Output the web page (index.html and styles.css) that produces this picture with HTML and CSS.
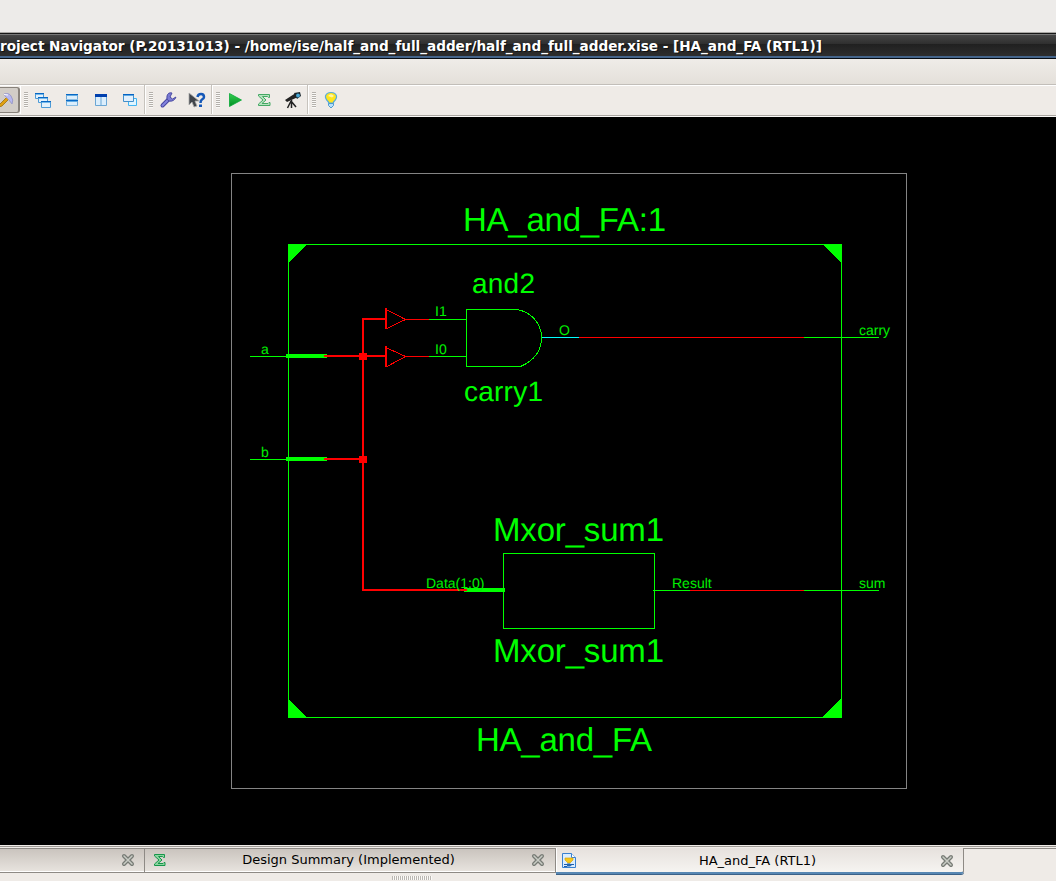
FILE: index.html
```html
<!DOCTYPE html>
<html lang="en">
<head>
<meta charset="utf-8">
<title>Project Navigator</title>
<link rel="stylesheet" href="styles.css">
</head>
<body>
<div class="app">
  <div class="desktop-strip"></div>
  <header class="titlebar"><span class="title">roject Navigator (P.20131013) - /home/ise/half_and_full_adder/half_and_full_adder.xise - [HA_and_FA (RTL1)]</span></header>
  <div class="menubar"></div>
  <div class="toolbar">
    <div class="pressed">
      <svg width="18" height="24" viewBox="0 0 18 24"><path d="M-1 17L7 9L9 11L2 18L-1 19Z" fill="#e0a010" stroke="#9b7010" stroke-width=".8"/><path d="M4 6Q9 4.500 11 8Q14 12 12 16L9 12L5 8Z" fill="#b8b8f0" stroke="#9c9cc8"/><path d="M4 6.500L8 7" stroke="#fff"/></svg>
    </div>
    <div class="group">
      <i class="grip"></i>
      <span class="tool"><svg width="18" height="18" viewBox="0 0 18 18"><g stroke="#4d9ad6" fill="#e3f1fc"><path d="M1.500 2.500h8v5h-8z"/><path d="M4.500 6.500h9v5h-9z"/><path d="M7.500 10.500h9v6h-9z"/></g><path d="M1 2.500h9M4 6.500h10M7 10.500h10" stroke="#0868c5"/><path d="M2 3.500h7M5 7.500h8M8 11.500h8" stroke="#75b8ea"/></svg></span>
      <span class="tool"><svg width="18" height="18" viewBox="0 0 18 18"><path d="M3.500 3.500h11v11h-11z" fill="#dceefc" stroke="#6fa9d6"/><path d="M3 3.500h12M3 9.500h12" stroke="#0868c5"/><path d="M4 4.500h10M4 10.500h10" stroke="#62ace4"/><path d="M3 8.500h12M3 14.500h12" stroke="#8bbde2"/></svg></span>
      <span class="tool"><svg width="18" height="18" viewBox="0 0 18 18"><path d="M3.500 3.500h11v11h-11zM9 5v9" fill="#dceefc" stroke="#6ba6d4"/><path d="M3 4.500h12" stroke="#003fae" stroke-width="3"/></svg></span>
      <span class="tool"><svg width="18" height="18" viewBox="0 0 18 18"><path d="M7.500 7.500h8v7h-8z" fill="#dff5ff" stroke="#42b4f2"/><path d="M2.500 3.500h10v7h-10z" fill="#e1effc" stroke="#438fcb"/><path d="M2 3.500h11" stroke="#0563c5"/><path d="M3 4.500h9" stroke="#60a9e1"/></svg></span>
    </div>
    <div class="group">
      <i class="grip"></i>
      <span class="tool"><svg width="18" height="18" viewBox="0 0 18 18"><path d="M3.500 14.500L9 9" stroke="#4646a0" stroke-width="4" stroke-linecap="round"/><path d="M3.500 14.500L9 9" stroke="#8585df" stroke-width="2" stroke-linecap="round"/><path d="M13 2Q9 1 8 5Q7 9 10 10Q15 11 17 6L13.500 8L11 6Z" fill="#7a7ad3" stroke="#4b4ba3"/></svg></span>
      <span class="tool"><svg width="18" height="18" viewBox="0 0 18 18"><path d="M1 2v12l3-3 2 5 3-1-2-5h4z" fill="#40444a" stroke="#aaa" stroke-width=".8"/><path d="M9.500 6Q10 3 13 3Q16 3 16 6Q16 7.500 14 8.500Q12.500 9.500 12.500 12" fill="none" stroke="#1558b8" stroke-width="2.500"/><path d="M11 13.500h3v2.500h-3z" fill="#1558b8"/></svg></span>
    </div>
    <div class="group">
      <i class="grip"></i>
      <span class="tool"><svg width="18" height="18" viewBox="0 0 18 18"><defs><linearGradient id="play" x2="0" y2="1"><stop stop-color="#35cf51"/><stop offset="1" stop-color="#008e23"/></linearGradient></defs><path d="M3.500 2.500L15.500 9L3.500 15.500Z" fill="url(#play)" stroke="#08a936" stroke-width=".8"/></svg></span>
      <span class="tool"><svg width="18" height="18" viewBox="0 0 18 18"><path d="M3.500 3.500h11v3h-1l-1-1h-5L11 9l-4 3.500h6l1-1h1v3H3.500v-1.500L8 9L3.500 5z" fill="#b4e3be" stroke="#45a864"/></svg></span>
      <span class="tool"><svg width="18" height="18" viewBox="0 0 18 18"><path d="M1 9L11 2.500L14 6L3 11Z" fill="#222"/><path d="M10 2L16 1L17 5L13 8Z" fill="#17242b"/><circle cx="14" cy="4.500" r="1.900" fill="#48a5d2"/><path d="M7.500 9v8M7 10L3.500 17M7 10L12 16" stroke="#222" stroke-width="1.500"/></svg></span>
    </div>
    <div class="group last">
      <i class="grip"></i>
      <span class="tool"><svg width="18" height="18" viewBox="0 0 18 18"><path d="M6.500 11Q3 7.500 3.500 5Q4.500 1.500 9 1.500T14.500 5Q15 7.500 11.500 11V12h-5z" fill="#ffe51e" stroke="#58abd9" stroke-width="1.200"/><path d="M6 5Q9 1.500 12 5L10 6.500Z" fill="#fff5a6"/><path d="M6.500 12.500h5v2L9 17L6.500 14.500z" fill="#b8dffa" stroke="#4b9bd1"/></svg></span>
    </div>
  </div>
  <main class="canvas">
    <svg class="schematic" width="1056" height="728" viewBox="0 117 1056 728" shape-rendering="crispEdges">
      <path class="frame" d="M231.500 173.500h675v615h-675z"/>
      <g class="green">
        <path d="M288.500 244.500h553v473h-553z"/>
        <path class="corner" d="M288 244h19l-19 19zM842 244v20l-20-20zM288 718v-20l19 20zM842 718v-21l-21 21z"/>
        <path d="M250 356.500h38M250 459.500h38M429 319.500h37M429 356.500h37M653 590.500h37M804 590.500h75M804 337.500h75"/>
        <path d="M515.500 309.500H466.500V366.500H520.500C533 361 541.500 351 541.500 337.500C541.500 323 530 310.500 515.500 309.500"/>
        <path d="M503.500 553.500h151v75h-151z"/>
        <path class="bus" d="M286 356h41M286 459h41M464 590h41"/>
      </g>
      <path class="cyan" d="M542 337.500h37"/>
      <g class="red">
        <path d="M405 319.500h24M405 356.500h24M579 337.500h225M690 590.500h114M387 310L405.500 319.500L387 328.500M387 348L405.500 356.500L387 366.500"/>
        <path class="wire" d="M324 356h62M386 319h-23v271h104M324 459h39M386 308v21M386 346v21"/>
        <path class="node" d="M359 353h8v7h-8zM359 456h8v7h-8z"/>
      </g>
      <g class="label large">
        <text x="463" y="231" textLength="203">HA_and_FA:1</text>
        <text x="493" y="541" textLength="171">Mxor_sum1</text>
        <text x="493" y="662" textLength="171">Mxor_sum1</text>
        <text x="476" y="751" textLength="176">HA_and_FA</text>
      </g>
      <g class="label medium">
        <text x="472" y="293" textLength="63">and2</text>
        <text x="464" y="401" textLength="79">carry1</text>
      </g>
      <g class="label small">
        <text x="261" y="354">a</text><text x="261" y="457">b</text>
        <text x="435" y="316">I1</text><text x="435" y="354">I0</text>
        <text x="559" y="335">O</text><text x="859" y="335">carry</text>
        <text x="426" y="588">Data(1:0)</text><text x="672" y="588">Result</text><text x="859" y="588">sum</text>
      </g>
    </svg>
  </main>
  <footer class="tabs">
    <div class="tab first"><span class="caption"></span><svg class="close" width="14" height="14" viewBox="0 0 14 14"><path d="M3 3l8 8M11 3l-8 8"/><path class="shine" d="M3 3l8 8M11 3l-8 8"/></svg></div>
    <div class="tab summary"><svg width="18" height="18" viewBox="0 0 18 18"><path d="M3.500 3.500h10v3h-1l-1-1h-4L11 9l-4 3.500h5l1-1h1v3H3.500v-1.500L8 9L3.500 5z" fill="#8bd4a0" stroke="#16964a"/></svg><span class="caption">Design Summary (Implemented)</span><svg class="close" width="14" height="14" viewBox="0 0 14 14"><path d="M3 3l8 8M11 3l-8 8"/><path class="shine" d="M3 3l8 8M11 3l-8 8"/></svg></div>
    <div class="tab active"><svg width="18" height="18" viewBox="0 0 18 18"><path d="M2.500 1.500h9l4 4v10h-13z" fill="#d9edff" stroke="#3981d0"/><path d="M11.500 1.500v4h4" fill="#fff" stroke="#3981d0"/><path d="M5 6h8v2l-3 3h-2L5 8z" fill="#f6c719" stroke="#d5a315" stroke-width=".7"/><path d="M4 12.500h3M11 12.500h3M4 14.500h3" stroke="#1c5cad"/><path d="M7 11.500h3l2 1.500-2 1.500H7z" fill="#2466b0"/></svg><span class="caption">HA_and_FA (RTL1)</span><svg class="close" width="14" height="14" viewBox="0 0 14 14"><path d="M3 3l8 8M11 3l-8 8"/><path class="shine" d="M3 3l8 8M11 3l-8 8"/></svg></div>
    <div class="remainder"></div>
  </footer>
  <div class="splitter"><i></i></div>
</div>
</body>
</html>
```

FILE: styles.css
```css
* { box-sizing: border-box; }
body { margin: 0; overflow: hidden; background: #efebe7; font-family: "DejaVu Sans", sans-serif; }
svg { display: block; flex: none; }
.app { width: 1056px; height: 881px; display: flex; flex-direction: column; overflow: hidden; }
.desktop-strip { height: 33px; flex: none; background: #edebe9; border-bottom: 1px solid #aaa8a5; }
.titlebar { height: 26px; flex: none; display: flex; align-items: flex-start; background: linear-gradient(#484848, #303030 40%, #202020 42%, #303030); border-top: 1px solid #171717; border-bottom: 1px solid #080d13; box-shadow: inset 0 1px #777, inset 0 -2px #45658b; }
.title { letter-spacing: -.015px; color: #fff; font-weight: bold; font-size: 13.6px; line-height: 24px; white-space: pre; text-shadow: 1px 1px #111; }
.menubar { height: 25px; flex: none; background: linear-gradient(#efece8, #e4e0da); }
.toolbar { height: 33px; flex: none; display: flex; background: #efebe7; border-top: 1px solid #c2beb9; border-bottom: 1px solid #faf9f7; box-shadow: inset 0 1px #fff, inset 0 -1px #aaa6a1; }
.pressed { width: 20px; height: 26px; margin-top: 2px; border: 1px solid #88827b; border-left: 0; border-right-width: 2px; border-radius: 0 3px 3px 0; background: #d2cdc7; flex: none; overflow: hidden; }
.group { height: 29px; padding-left: 4px; border-right: 1px solid #c7c3bd; box-shadow: inset 1px 0 #fff; display: flex; align-items: center; }
.group.last { border-right: 0; }
.grip { width: 4px; height: 16px; background: repeating-linear-gradient(#b4b0ab 0 1px, #faf9f7 1px 2px); }
.tool { width: 29px; display: flex; justify-content: center; }
.canvas { height: 728px; flex: none; background: #000; }
.schematic { fill: none; }
.frame { stroke: #848484; }
.green { stroke: #0f0; }
.corner { fill: #0f0; stroke: none; }
.bus { stroke-width: 4; }
.cyan { stroke: #0ff; }
.red { stroke: #f00; }
.wire { stroke-width: 2; }
.node { fill: #f00; stroke: none; }
.label { fill: #0f0; font-family: "Liberation Sans", Arial, sans-serif; text-rendering: geometricPrecision; }
.large { font-size: 33px; }
.medium { font-size: 28px; }
.small { font-size: 14px; fill: #00f000; }
.tabs { height: 30px; flex: none; display: flex; border-top: 1px solid #efebe7; background: linear-gradient(#9d9994 0 1px, #efebe7 1px); padding-top: 2px; }
.tab { height: 25px; display: flex; align-items: center; font-size: 13px; color: #000; border-top: 1px solid #8e8a85; border-right: 1px solid #8e8a85; border-bottom: 1px solid #8e8a85; background: linear-gradient(#cac4be, #e8e4df); box-shadow: inset 0 -1px #fff; padding: 0 9px 2px 6px; }
.caption { flex: 1; text-align: center; white-space: nowrap; }
.first { width: 145px; }
.summary { width: 411px; padding-right: 10px; }
.summary .caption { padding-right: 3px; }
.active { width: 408px; height: 26px; border-top: 0; border-bottom: 2px solid #5787b3; border-radius: 0 0 3px 0; background: linear-gradient(#e6e1dd, #f6f4f1); box-shadow: inset 1px 0 #fff, 0 1px #3b6187; padding: 1px 9px 0 4px; }
.active .caption { padding-right: 3px; }
.remainder { flex: 1; height: 1px; background: #8e8a85; }
.close { stroke: #777b75; stroke-width: 4; stroke-linecap: round; }
.shine { stroke: #c9ccc5; stroke-width: 1.5; }
.splitter { flex: 1; display: flex; padding: 1px 0 0 392px; }
.splitter i { width: 40px; height: 4px; background: repeating-linear-gradient(90deg, #bbb7b2 0 1px, #faf9f7 1px 2px); }
```
